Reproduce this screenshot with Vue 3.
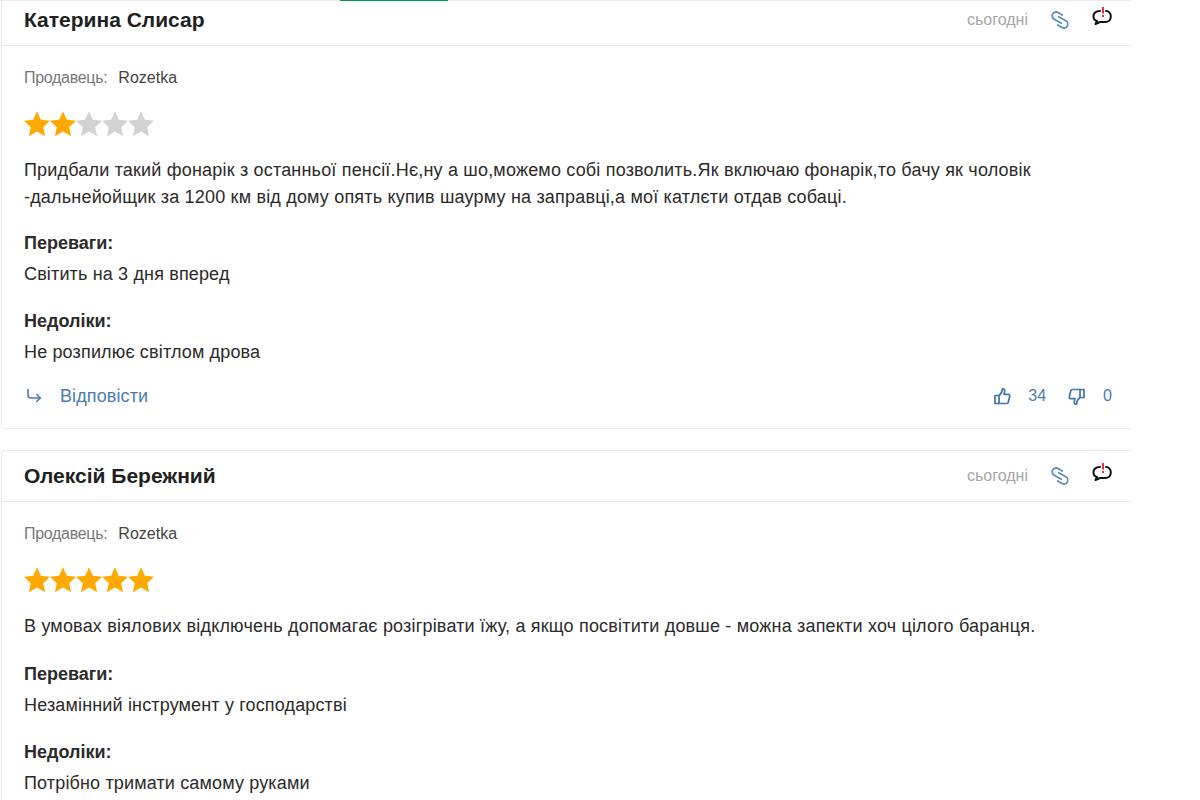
<script setup>
const reviews = [
  {
    name: 'Катерина Слисар',
    rating: 2,
    text: ['Придбали такий фонарік з останньої пенсії.Нє,ну а шо,можемо собі позволить.Як включаю фонарік,то бачу як чоловік', '-дальнейойщик за 1200 км від дому опять купив шаурму на заправці,а мої катлєти отдав собаці.'],
    pros: 'Світить на 3 дня вперед',
    cons: 'Не розпилює світлом дрова',
    likes: 34,
    dislikes: 0,
    footer: true
  },
  {
    name: 'Олексій Бережний',
    rating: 5,
    text: ['В умовах віялових відключень допомагає розігрівати їжу, а якщо посвітити довше - можна запекти хоч цілого баранця.'],
    pros: 'Незамінний інструмент у господарстві',
    cons: 'Потрібно тримати самому руками',
    footer: false
  }
]
const star = 'M12 1.5l3.2 7 7.6.9-5.6 5.2 1.5 7.5L12 18.3l-6.7 3.8 1.5-7.5L1.2 9.4l7.6-.9z'
</script>

<template>
  <div class="page">
    <div class="tabLine"><span class="tabActive"></span></div>
    <div class="list">
      <div v-for="review in reviews" :key="review.name" class="card">
        <div class="head">
          <span class="name">{{ review.name }}</span>
          <div class="headRight">
            <span class="date">сьогодні</span>
            <svg class="linkIcon" width="22" height="22" viewBox="0 0 20 20" fill="none" stroke="#5b8cbc" stroke-width="1.6" stroke-linecap="round">
              <g transform="rotate(30 10 10)">
                <path d="M9.500 5H5a3.500 3.500 0 0 0 0 7H12.500" />
                <path d="M7.500 8H15a3.500 3.500 0 0 1 0 7H10.500" />
              </g>
            </svg>
            <svg class="reportIcon" width="22" height="22" viewBox="0 0 22 22" fill="none">
              <path d="M9 6C5 6 2.500 8 2.500 11.500 2.500 14 4 15.500 6 16L4.500 19 9 17H14C17.500 17 19.800 15 19.800 11.500 19.800 8 17.500 6 15 6" stroke="#111" stroke-width="2" stroke-linecap="round" stroke-linejoin="round" />
              <path d="M12 2v6.500" stroke="#e8303a" stroke-width="2" />
              <path d="M12 10v2" stroke="#e8303a" stroke-width="2" />
            </svg>
          </div>
        </div>
        <div class="body">
          <div class="seller"><span class="sellerLabel">Продавець:</span><span class="sellerName">Rozetka</span></div>
          <div class="stars">
            <svg v-for="n in 5" :key="n" width="26" height="26" viewBox="1.2 1.2 21.6 21.6" class="star">
              <path :d="star" :fill="n <= review.rating ? '#ffa900' : '#d2d2d2'" />
            </svg>
          </div>
          <p class="text"><span v-for="line in review.text" :key="line" class="textLine">{{ line }}</span></p>
          <div class="block">
            <div class="blockTitle">Переваги:</div>
            <div class="blockText">{{ review.pros }}</div>
          </div>
          <div class="block">
            <div class="blockTitle">Недоліки:</div>
            <div class="blockText">{{ review.cons }}</div>
          </div>
          <div v-if="review.footer" class="foot">
            <a class="reply">
              <svg width="18" height="18" viewBox="0 0 18 18" fill="none" stroke="#4a7cb0" stroke-width="1.600" stroke-linecap="round" stroke-linejoin="round">
                <path d="M4 2.500v5.500a3 3 0 0 0 3 3h9" />
                <path d="M12.800 7.500l3.500 3.500-3.500 3.500" />
              </svg>
              Відповісти
            </a>
            <div class="votes">
              <svg width="19" height="19" viewBox="0 0 19 19" fill="none" stroke="#3f76ad" stroke-width="1.700" stroke-linejoin="round">
                <path d="M6 8.500H2v8h4z" />
                <path d="M6 8.500c2-1.500 3.200-3.500 3.300-6.300 0-1 2.400-.8 2.400 1.300 0 1.300-.4 2.700-.7 3.900h4.400c1.100 0 1.600 1 1.300 1.900l-1.500 6.100c-.2.700-.7 1.100-1.400 1.100H6" />
              </svg>
              <span class="count">{{ review.likes }}</span>
              <svg class="down" width="19" height="19" viewBox="0 0 19 19" fill="none" stroke="#3f76ad" stroke-width="1.700" stroke-linejoin="round">
                <path d="M13 10.500h4v-8h-4z" />
                <path d="M13 10.500c-2 1.500-3.200 3.500-3.300 6.300 0 1-2.400.8-2.400-1.300 0-1.300.4-2.700.7-3.900H3.600c-1.100 0-1.600-1-1.300-1.900l1.500-6.100c.2-.7.700-1.100 1.400-1.100H13" />
              </svg>
              <span class="count zero">{{ review.dislikes }}</span>
            </div>
          </div>
          <div v-else class="footSpace"></div>
        </div>
      </div>
    </div>
  </div>
</template>

<style scoped>
.page {
  position: relative;
  height: 800px;
  overflow: hidden;
  background: #fff;
  font-family: "Liberation Sans", Arial, sans-serif;
  color: #2c2a2a;
}

.tabLine {
  position: absolute;
  top: 0;
  left: 0;
  width: 1131px;
  height: 1px;
  background: #e9e9e9;
  z-index: 2;
}

.tabActive {
  position: absolute;
  left: 340px;
  top: 0;
  width: 108px;
  height: 1px;
  background: #00a046;
}

.list {
  display: flex;
  flex-direction: column;
  gap: 21px;
  width: 1130px;
  margin-top: -6px;
  margin-left: 1px;
}

.card {
  border: 1px solid #e9e9e9;
  border-right: none;
  border-radius: 4px 0 0 4px;
}

.head {
  display: flex;
  align-items: center;
  justify-content: space-between;
  height: 50px;
  padding: 0 18px 0 22px;
  border-bottom: 1px solid #e9e9e9;
}

.name {
  font-size: 21px;
  font-weight: 700;
  color: #221f1f;
}

.headRight {
  display: flex;
  align-items: center;
}

.date {
  font-size: 16px;
  color: #a6a5a5;
}

.linkIcon {
  margin-left: 21px;
}

.reportIcon {
  margin-left: 20px;
  margin-top: -8px;
}

.body {
  padding: 22px 18px 0 22px;
}

.seller {
  display: flex;
  font-size: 16px;
  line-height: 20px;
}

.sellerLabel {
  color: #797878;
  margin-right: 11px;
  letter-spacing: -0.3px;
}

.sellerName {
  color: #444;
}

.stars {
  display: flex;
  height: 26px;
  margin-top: 23px;
}

.star {
  width: 26px;
}

.text {
  margin: 20px 0 0;
  min-height: 29px;
  font-size: 18px;
  line-height: 27px;
  letter-spacing: 0.185px;
}

.textLine {
  display: block;
}

.block {
  margin-top: 20px;
}

.block + .block {
  margin-top: 23px;
}

.blockTitle {
  font-size: 18px;
  font-weight: 700;
  line-height: 24px;
}

.blockText {
  font-size: 18px;
  line-height: 24px;
  letter-spacing: 0.15px;
  margin-top: 7px;
}

.foot {
  display: flex;
  align-items: center;
  justify-content: space-between;
  margin-top: 11px;
  height: 42px;
  padding-bottom: 11px;
  padding-right: 1px;
}

.footSpace {
  height: 64px;
}

.reply {
  display: flex;
  align-items: center;
  gap: 18px;
  font-size: 18px;
  letter-spacing: 0.1px;
  color: #4a7cb0;
}

.votes {
  display: flex;
  align-items: center;
  font-size: 16px;
  color: #4a7cb0;
}

.count {
  margin-left: 16px;
}

.zero {
  margin-left: 17px;
}

.down {
  margin-left: 21px;
}
</style>

<style>
html, body {
  overflow: hidden;
  background: #fff;
}
</style>
